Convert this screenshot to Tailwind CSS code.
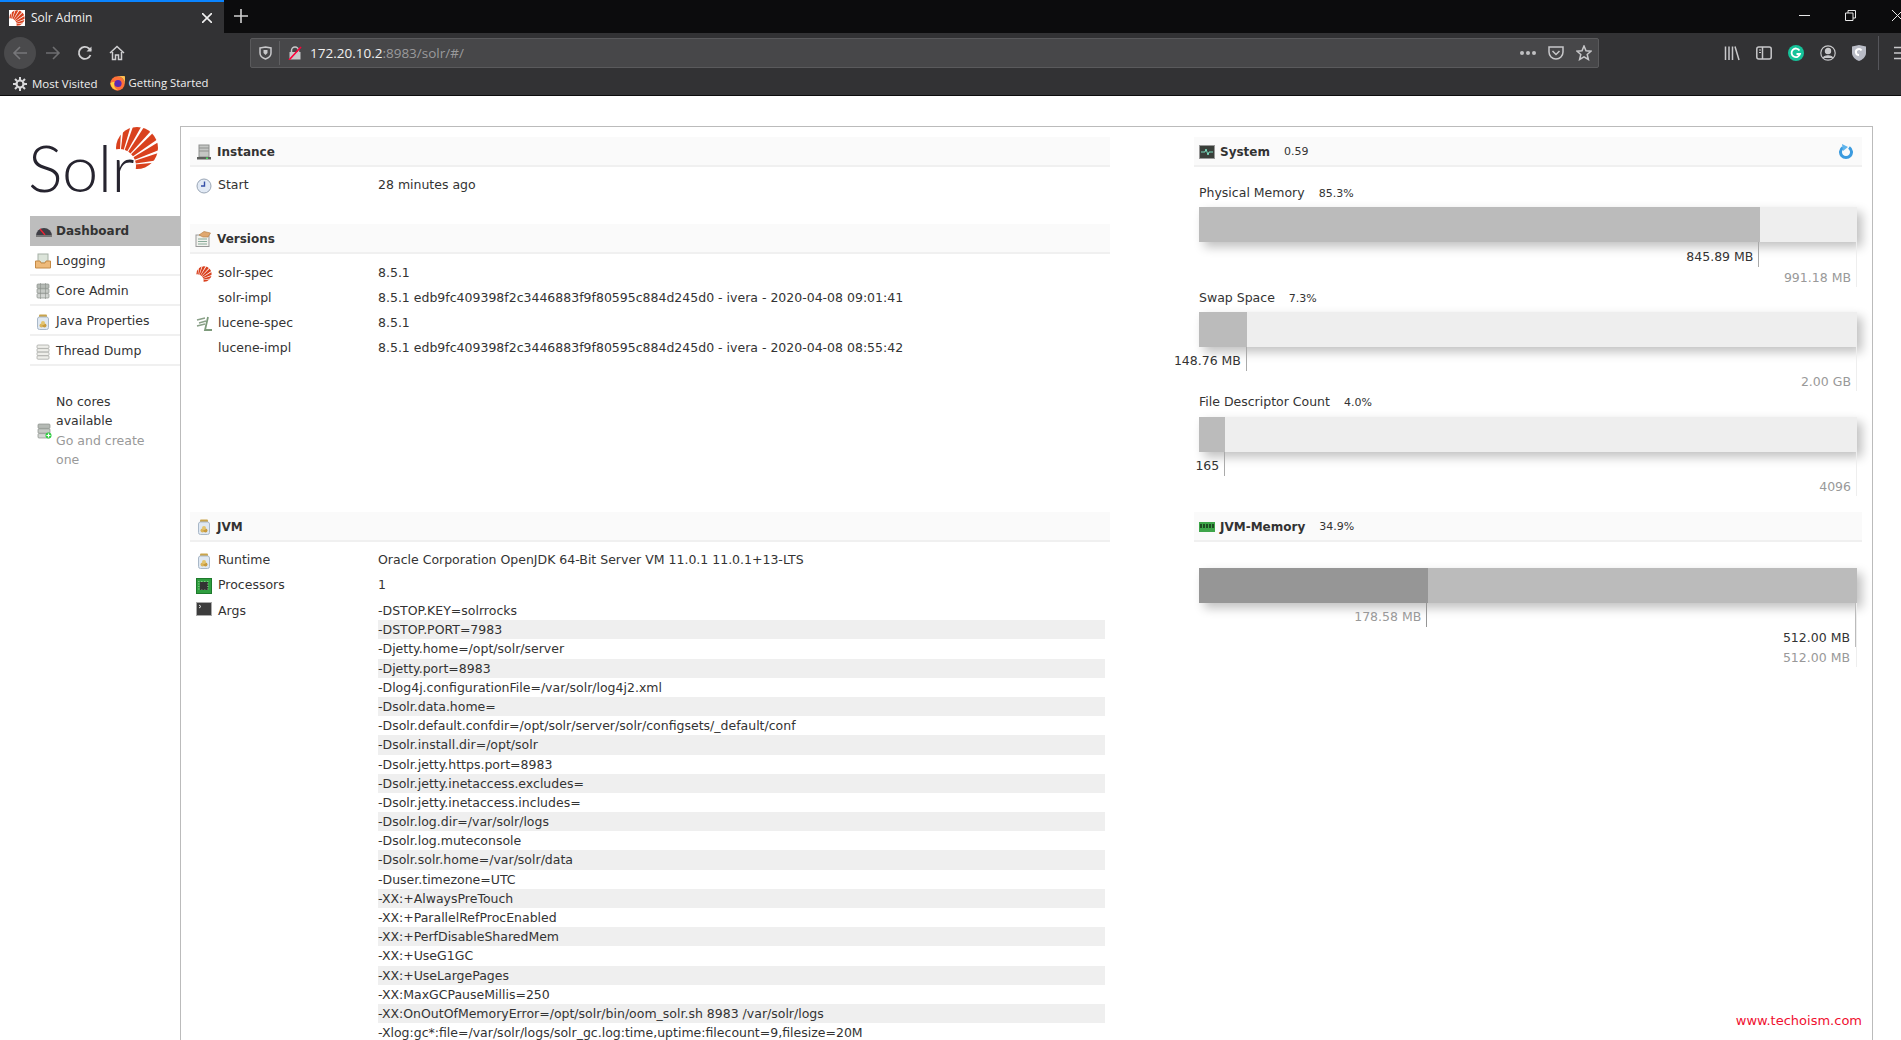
<!DOCTYPE html>
<html lang="en">
<head>
    <meta charset="UTF-8">
    <title>Solr Admin</title>
    <script src="https://cdn.jsdelivr.net/npm/@tailwindcss/browser@4"></script>
</head>
<body class="w-[1901px] h-[1040px] overflow-hidden bg-white text-[#333] text-[12.5px] [font-family:'DejaVu_Sans',sans-serif]">
    <svg class="hidden">
        <symbol id="sun" viewBox="0 0 44 44">
            <circle cx="22" cy="22" r="21" fill="#d9411e"/>
            <g fill="#fff">
                <circle cx="4" cy="40" r="17"/>
                <polygon points="4,40 12.1,-29.5 8.1,-29.9"/>
                <polygon points="4,40 27.5,-26 23.7,-27.2"/>
                <polygon points="4,40 41.8,-19 38.4,-21"/>
                <polygon points="4,40 54,-8.9 51.2,-11.7"/>
                <polygon points="4,40 63.8,3.6 61.6,.2"/>
                <polygon points="4,40 70.5,17.9 69.1,14.1"/>
                <polygon points="4,40 73.7,33.5 73.3,29.5"/>
            </g>
        </symbol>
        <symbol id="jar" viewBox="0 0 16 16">
            <rect x="4" y="0.5" width="8" height="3" rx="1" fill="#c9a44c"/>
            <rect x="2.5" y="3" width="11" height="12.5" rx="2" fill="#dfe8f2" stroke="#a9b8c8"/>
            <circle cx="6.5" cy="11.5" r="2" fill="#d9b45c"/>
            <circle cx="9.5" cy="11.5" r="2" fill="#c79a3e"/>
            <circle cx="8" cy="9" r="2" fill="#e3c46e"/>
        </symbol>
        <symbol id="db" viewBox="0 0 16 16">
            <rect x="2" y="1" width="12" height="4.4" rx="1" fill="#b5bab5" stroke="#8a8f8a" stroke-width=".7"/>
            <rect x="2" y="5.8" width="12" height="4.4" rx="1" fill="#c5c9c5" stroke="#8a8f8a" stroke-width=".7"/>
            <rect x="2" y="10.6" width="12" height="4.4" rx="1" fill="#d2d5d2" stroke="#8a8f8a" stroke-width=".7"/>
        </symbol>
    </svg>

    <!-- browser chrome -->
    <div class="h-[96px] bg-[#323234] text-[#f0f0f0] [font-family:'Open_Sans',sans-serif] border-b border-[#0c0c0d] overflow-hidden">
        <div class="h-[33px] bg-[#0c0c0d] flex">
            <div class="w-[224px] bg-[#323234] border-t-2 border-[#0a84ff] flex items-center pl-[9px] pr-[12px] text-[12px]">
                <svg class="w-4 h-4 bg-white" viewBox="0 0 16 16"><use href="#sun"/></svg>
                <span class="ml-[6px] flex-1">Solr Admin</span>
                <svg class="w-[10px] h-[10px]" viewBox="0 0 10 10" stroke="#f0f0f0" stroke-width="1.6"><path d="M0 0 10 10M10 0 0 10"/></svg>
            </div>
            <svg class="w-[14px] h-[14px] ml-[10px] mt-[9px]" viewBox="0 0 14 14" stroke="#d0d0d0" stroke-width="1.6"><path d="M7 0V14M0 7H14"/></svg>
            <div class="flex-1"></div>
            <div class="flex items-center pb-[3px]">
                <svg class="w-[11px] h-[11px]" viewBox="0 0 11 11" stroke="#e8e8e8"><path d="M0 5.5H11"/></svg>
                <svg class="w-[11px] h-[11px] ml-[35px]" viewBox="0 0 11 11" stroke="#e8e8e8" fill="none"><path d="M.5 3H8V10.500H.5ZM3 3V.5H10.500V8H8"/></svg>
                <svg class="w-[11px] h-[11px] ml-[36px] mr-[-2px]" viewBox="0 0 11 11" stroke="#e8e8e8"><path d="M0 0 11 11M11 0 0 11"/></svg>
            </div>
        </div>
        <div class="h-[39px] flex items-center [&>*]:shrink-0">
            <div class="w-8 h-8 rounded-full bg-[#4a4a4c] ml-1 flex items-center justify-center">
                <svg class="w-4 h-4" viewBox="0 0 16 16" fill="none" stroke="#77777a" stroke-width="1.6"><path d="M15 8H2M8 2 2 8l6 6"/></svg>
            </div>
            <svg class="w-4 h-4 ml-[9px]" viewBox="0 0 16 16" fill="none" stroke="#6e6e70" stroke-width="1.6"><path d="M1 8H14M8 2l6 6-6 6"/></svg>
            <svg class="w-4 h-4 ml-4" viewBox="0 0 16 16" fill="none" stroke="#d0d0d2" stroke-width="1.8"><path d="M13.500 10A6 6 0 1 1 12 3.500L14 5.500"/><path d="M14.500 1.500V6.500H9.500" fill="#d0d0d2" stroke="none"/></svg>
            <svg class="w-4 h-4 ml-4" viewBox="0 0 16 16" fill="none" stroke="#d0d0d2" stroke-width="1.5"><path d="M1 8 8 1.500 15 8M3.500 7V14.500H6.500V10H9.500V14.500H12.500V7"/></svg>
            <div class="w-[1349px] h-[30px] ml-[125px] bg-[#474749] border border-[#5a5a5c] rounded-[2px] flex items-center pl-[8px] pr-[6px]">
                <svg class="w-[13px] h-[14px]" viewBox="0 0 13 14" fill="none" stroke="#c8c8ca" stroke-width="1.5"><path d="M1 2 6.500 1 12 2V7C12 10 9.500 12 6.500 13 3.500 12 1 10 1 7Z"/><path d="M4.500 4H8.500V7L6.500 9 4.500 7Z" fill="#c8c8ca" stroke="none"/></svg>
                <div class="w-px h-[24px] bg-[#5f5f61] ml-[7px]"></div>
                <svg class="w-[14px] h-[14px] ml-[8px]" viewBox="0 0 14 14" fill="none"><path d="M3.500 6V4.500a3.500 3.500 0 0 1 7 0V6" stroke="#c8c8ca" stroke-width="1.5"/><rect x="1.500" y="6" width="11" height="7.500" fill="#c8c8ca"/><path d="M1 14 13 1" stroke="#ff0039" stroke-width="1.6"/></svg>
                <span class="ml-[8px] mt-[2px] text-[13.500px] text-[#f0f0f0]">172.20.10.2<span class="text-[#9a9a9c]">:8983/solr/#/</span></span>
                <div class="flex-1"></div>
                <div class="flex gap-[2px] mr-[12px]"><span class="w-1 h-1 rounded-full bg-[#c0c0c2]"></span><span class="w-1 h-1 rounded-full bg-[#c0c0c2]"></span><span class="w-1 h-1 rounded-full bg-[#c0c0c2]"></span></div>
                <svg class="w-4 h-4" viewBox="0 0 16 16" fill="none" stroke="#c8c8ca" stroke-width="1.500"><path d="M1 2H15V7A7 7 0 0 1 1 7Z"/><path d="M4.500 6 8 9.500 11.500 6"/></svg>
                <svg class="w-4 h-4 ml-[12px]" viewBox="0 0 16 16" fill="none" stroke="#c8c8ca" stroke-width="1.500"><path d="M8 1 10 5.800 15 6.200 11.200 9.500 12.400 14.500 8 11.800 3.600 14.500 4.800 9.500 1 6.200 6 5.800Z"/></svg>
            </div>
            <svg class="w-4 h-4 ml-[125px]" viewBox="0 0 16 16" stroke="#c8c8ca" stroke-width="1.500"><path d="M1.500 1.500V15M5 1.500V15M8.500 1.500V15M11 1.500 15 15"/></svg>
            <svg class="w-4 h-4 ml-4" viewBox="0 0 16 16" fill="none" stroke="#c8c8ca" stroke-width="1.500"><rect x=".8" y="2" width="14.400" height="12" rx="2"/><path d="M6.500 2V14" /><path d="M3 5H5M3 7.500H5" stroke-width="1"/></svg>
            <svg class="w-4 h-4 ml-4" viewBox="0 0 16 16" fill="none"><circle cx="8" cy="8" r="8" fill="#15c39a"/><path d="M11.500 5.500A4.300 4.300 0 1 0 12 9H8.500" stroke="#fff" stroke-width="1.800"/></svg>
            <svg class="w-4 h-4 ml-4" viewBox="0 0 16 16" fill="none" stroke="#c8c8ca" stroke-width="1.200"><circle cx="8" cy="8" r="7.200"/><circle cx="8" cy="6" r="2.600" fill="#c8c8ca"/><path d="M3.500 13C4 10 12 10 12.500 13" fill="#c8c8ca"/></svg>
            <svg class="w-[14px] h-4 ml-[16px]" viewBox="0 0 14 16"><path d="M0 1.500 7 0 14 1.500V8C14 12 10 15 7 16 4 15 0 12 0 8Z" fill="#b9bcc6"/><path d="M9.500 5.500A3 3 0 1 0 7 10" fill="none" stroke="#fff" stroke-width="2"/></svg>
            <div class="w-px h-[34px] bg-[#55555a] ml-[12px]"></div>
            <svg class="w-4 h-4 ml-[15px]" viewBox="0 0 16 16" stroke="#c8c8ca" stroke-width="1.600"><path d="M0 2.500H16M0 8H16M0 13.500H16"/></svg>
        </div>
        <div class="h-[23px] flex items-center text-[11.500px]">
            <svg class="w-[14px] h-[14px] ml-[13px]" viewBox="0 0 14 14" fill="none" stroke="#d8d8da"><circle cx="7" cy="7" r="3.500" stroke-width="2.200"/><path stroke-width="2" d="M7 0V3M7 11V14M0 7H3M11 7H14M2 2 4 4M10 10 12 12M12 2 10 4M4 10 2 12"/></svg>
            <span class="ml-[5px]">Most Visited</span>
            <svg class="w-[15px] h-[15px] ml-[12px]" viewBox="0 0 15 15"><circle cx="7.500" cy="7.500" r="7.200" fill="#ff7139"/><path d="M7.500 .3A7.200 7.200 0 0 1 14.700 7.500 5 5 0 0 0 7.500 .3Z" fill="#ffbd4f"/><circle cx="8" cy="7.500" r="3.600" fill="#5b2bb3"/><path d="M.4 7C1 12 5 14 8 14 5 13 3 9.500 4.500 6 3 6 1.500 6 .4 7Z" fill="#ffcf3f"/></svg>
            <span class="ml-[4px] text-[11.300px]">Getting Started</span>
        </div>
    </div>

    <div class="flex h-[944px] overflow-hidden pt-[30px] pl-[30px]">
        <!-- sidebar -->
        <div class="w-[150px] shrink-0">
            <div class="h-[90px] relative">
                <svg class="absolute left-[85px] top-0 w-[44px] h-[44px]"><use href="#sun"/></svg>
                <div class="relative pt-[5px] text-[#26242f] text-[65px] leading-[72px] font-light tracking-[-.5px] ml-[-2px] [font-family:Lato,sans-serif]">Solr</div>
            </div>
            <div class="h-[30px] bg-[#bdbdbd] flex items-center pl-[6px] font-bold text-[12px]">
                <svg class="w-4 h-4" viewBox="0 0 16 16"><path d="M0 13A8 8 0 0 1 16 13Z" fill="#3f3f46"/><path d="M4 6 9 12" stroke="#e23" stroke-width="1.300"/><rect y="12" width="16" height="2" fill="#777"/></svg>
                <span class="ml-[4px]">Dashboard</span>
            </div>
            <div class="h-[30px] border-b-2 border-[#f0f0f0] flex items-center pl-[5px] pt-[2px]">
                <svg class="w-4 h-4" viewBox="0 0 16 16"><rect x="3" y="1" width="10" height="9" fill="#dce4da" stroke="#a5b0a5"/><path d="M.5 8H5L6 10H10L11 8H15.500V15H.5Z" fill="#eeba7a" stroke="#c58a45"/></svg>
                <span class="ml-[5px]">Logging</span>
            </div>
            <div class="h-[30px] border-b-2 border-[#f0f0f0] flex items-center pl-[5px] pt-[2px]">
                <svg class="w-4 h-4" viewBox="0 0 16 16"><use href="#db"/><path d="M5.500 0V16M10.500 0V16" stroke="#8a8f8a" stroke-width=".6"/></svg>
                <span class="ml-[5px]">Core Admin</span>
            </div>
            <div class="h-[30px] border-b-2 border-[#f0f0f0] flex items-center pl-[5px] pt-[3px]">
                <svg class="w-4 h-4"><use href="#jar"/></svg>
                <span class="ml-[5px]">Java Properties</span>
            </div>
            <div class="h-[30px] border-b-2 border-[#f0f0f0] flex items-center pl-[5px] pt-[3px]">
                <svg class="w-4 h-4" viewBox="0 0 16 16" fill="#eeeeea" stroke="#a8aaa6" stroke-width=".8"><rect x="2" y="1" width="12" height="3.400" rx="1"/><rect x="2" y="4.600" width="12" height="3.400" rx="1"/><rect x="2" y="8.200" width="12" height="3.400" rx="1"/><rect x="2" y="11.800" width="12" height="3.400" rx="1"/></svg>
                <span class="ml-[5px]">Thread Dump</span>
            </div>
            <div class="mt-[26px] flex items-center pl-[6px] leading-[19.300px]">
                <svg class="w-4 h-4 shrink-0" viewBox="0 0 16 16"><use href="#db"/><circle cx="12.500" cy="12.500" r="3" fill="#2ecc40"/><path d="M12.500 10.500V14.500M10.500 12.500H14.500" stroke="#fff" stroke-width="1.200"/></svg>
                <div class="ml-[4px] w-[90px]">
                    <div>No cores available</div>
                    <div class="text-[#999]">Go and create one</div>
                </div>
            </div>
        </div>

        <!-- main frame -->
        <div class="w-[1693px] h-[1000px] border-l border-t border-r border-[#bbb] flex pt-[10px]">
            <div class="w-[920px] ml-[9px] shrink-0">
                <section class="h-[87px]">
                    <div class="h-[30px] bg-[#fafafa] border-b-2 border-[#f0f0f0] flex items-center pl-[6px] pt-[2px] font-bold text-[12px]">
                        <svg class="w-4 h-4" viewBox="0 0 16 16"><rect x="3" y="1" width="10" height="12" fill="#c4c6c4" stroke="#8e908e"/><path d="M3 4H13M3 7H13" stroke="#8e908e"/><rect x="1" y="13" width="14" height="2.500" fill="#5d5f5d"/><rect x="10" y="13.500" width="2" height="1.500" fill="#4ade60"/></svg>
                        <span class="ml-[5px]">Instance</span>
                    </div>
                    <div class="pt-[6px]">
                        <div class="h-[25px] flex items-center pl-[6px]">
                            <svg class="w-4 h-4 shrink-0" viewBox="0 0 16 16"><circle cx="8" cy="8" r="7" fill="#e2eaf5" stroke="#9aa6b6"/><path d="M8.500 3.500V8H5" fill="none" stroke="#3550a8" stroke-width="1.400"/></svg>
                            <span class="w-[160px] ml-[6px] shrink-0">Start</span><span>28 minutes ago</span>
                        </div>
                    </div>
                </section>
                <section class="h-[288px]">
                    <div class="h-[30px] bg-[#fafafa] border-b-2 border-[#f0f0f0] flex items-center pl-[5px] pt-[2px] font-bold text-[12px]">
                        <svg class="w-4 h-4" viewBox="0 0 16 16"><rect x="1" y="4" width="13" height="11.500" fill="#f2f2ee" stroke="#999"/><path d="M3 8H12M3 10.500H12M3 13H12" stroke="#8a9" /><path d="M4 4 9 .5 15.500 2 13 6 8 6Z" fill="#e0a870" stroke="#b07a40" stroke-width=".6"/></svg>
                        <span class="ml-[6px]">Versions</span>
                    </div>
                    <div class="pt-[7px]">
                        <div class="h-[25px] flex items-center pl-[6px]">
                            <svg class="w-4 h-4 shrink-0"><use href="#sun" width="16" height="16"/></svg>
                            <span class="w-[160px] ml-[6px] shrink-0">solr-spec</span><span>8.5.1</span>
                        </div>
                        <div class="h-[25px] flex items-center pl-[28px]">
                            <span class="w-[160px] shrink-0">solr-impl</span><span>8.5.1 edb9fc409398f2c3446883f9f80595c884d245d0 - ivera - 2020-04-08 09:01:41</span>
                        </div>
                        <div class="h-[25px] flex items-center pl-[6px]">
                            <svg class="w-4 h-4 shrink-0" viewBox="0 0 16 16" fill="none" stroke="#8aa088" stroke-width="1.400"><path d="M1 4 9 2M3 7 10 5M1 10 9 8"/><path d="M12 1 9 14H16" stroke="#7d9a7b" stroke-width="1.800"/></svg>
                            <span class="w-[160px] ml-[6px] shrink-0">lucene-spec</span><span>8.5.1</span>
                        </div>
                        <div class="h-[25px] flex items-center pl-[28px]">
                            <span class="w-[160px] shrink-0">lucene-impl</span><span>8.5.1 edb9fc409398f2c3446883f9f80595c884d245d0 - ivera - 2020-04-08 08:55:42</span>
                        </div>
                    </div>
                </section>
                <section>
                    <div class="h-[30px] bg-[#fafafa] border-b-2 border-[#f0f0f0] flex items-center pl-[6px] pt-[2px] font-bold text-[12px]">
                        <svg class="w-4 h-4"><use href="#jar"/></svg>
                        <span class="ml-[5px]">JVM</span>
                    </div>
                    <div class="pt-[6px]">
                        <div class="h-[25px] flex items-center pl-[6px]">
                            <svg class="w-4 h-4 shrink-0"><use href="#jar"/></svg>
                            <span class="w-[160px] ml-[6px] shrink-0">Runtime</span><span>Oracle Corporation OpenJDK 64-Bit Server VM 11.0.1 11.0.1+13-LTS</span>
                        </div>
                        <div class="h-[25px] flex items-center pl-[6px]">
                            <svg class="w-4 h-4 shrink-0" viewBox="0 0 16 16"><rect x=".5" y=".5" width="15" height="15" fill="#2f9e3f" stroke="#1d7a2c"/><rect x="4" y="4" width="8" height="8" fill="#333"/><path d="M2 3.500H14M2 6H14M2 8.500H14M2 11H14" stroke="#c8e8c0" stroke-width=".5" stroke-dasharray="1.500 1.500"/><rect x="5" y="5" width="6" height="6" fill="#333"/></svg>
                            <span class="w-[160px] ml-[6px] shrink-0">Processors</span><span>1</span>
                        </div>
                        <div class="flex mt-[3px] pl-[6px]">
                            <svg class="w-4 h-4 shrink-0" viewBox="0 0 16 16"><rect x=".5" y="1.500" width="15" height="13" fill="#3c3c3c" stroke="#aaa"/><path d="M3 4 5 5.500 3 7" stroke="#ddd" fill="none"/></svg>
                            <span class="w-[160px] ml-[6px] shrink-0 leading-[19.200px]">Args</span>
                            <div class="w-[727px] leading-[19.200px]">
                                <div class="h-[19.200px]">-DSTOP.KEY=solrrocks</div>
                                <div class="h-[19.200px] bg-[#efefef]">-DSTOP.PORT=7983</div>
                                <div class="h-[19.200px]">-Djetty.home=/opt/solr/server</div>
                                <div class="h-[19.200px] bg-[#efefef]">-Djetty.port=8983</div>
                                <div class="h-[19.200px]">-Dlog4j.configurationFile=/var/solr/log4j2.xml</div>
                                <div class="h-[19.200px] bg-[#efefef]">-Dsolr.data.home=</div>
                                <div class="h-[19.200px]">-Dsolr.default.confdir=/opt/solr/server/solr/configsets/_default/conf</div>
                                <div class="h-[19.200px] bg-[#efefef]">-Dsolr.install.dir=/opt/solr</div>
                                <div class="h-[19.200px]">-Dsolr.jetty.https.port=8983</div>
                                <div class="h-[19.200px] bg-[#efefef]">-Dsolr.jetty.inetaccess.excludes=</div>
                                <div class="h-[19.200px]">-Dsolr.jetty.inetaccess.includes=</div>
                                <div class="h-[19.200px] bg-[#efefef]">-Dsolr.log.dir=/var/solr/logs</div>
                                <div class="h-[19.200px]">-Dsolr.log.muteconsole</div>
                                <div class="h-[19.200px] bg-[#efefef]">-Dsolr.solr.home=/var/solr/data</div>
                                <div class="h-[19.200px]">-Duser.timezone=UTC</div>
                                <div class="h-[19.200px] bg-[#efefef]">-XX:+AlwaysPreTouch</div>
                                <div class="h-[19.200px]">-XX:+ParallelRefProcEnabled</div>
                                <div class="h-[19.200px] bg-[#efefef]">-XX:+PerfDisableSharedMem</div>
                                <div class="h-[19.200px]">-XX:+UseG1GC</div>
                                <div class="h-[19.200px] bg-[#efefef]">-XX:+UseLargePages</div>
                                <div class="h-[19.200px]">-XX:MaxGCPauseMillis=250</div>
                                <div class="h-[19.200px] bg-[#efefef]">-XX:OnOutOfMemoryError=/opt/solr/bin/oom_solr.sh 8983 /var/solr/logs</div>
                                <div class="h-[19.200px]">-Xlog:gc*:file=/var/solr/logs/solr_gc.log:time,uptime:filecount=9,filesize=20M</div>
                            </div>
                        </div>
                    </div>
                </section>
            </div>

            <div class="w-[668px] ml-[84px] shrink-0">
                <section class="h-[375px]">
                    <div class="h-[30px] bg-[#fafafa] border-b-2 border-[#f0f0f0] flex items-center pl-[5px] pt-[2px]">
                        <svg class="w-4 h-4" viewBox="0 0 16 16"><rect x=".5" y="1.500" width="15" height="13" fill="#3a3f3a" stroke="#999"/><path d="M2 8H6L7 5 9 11 10 8H14" fill="none" stroke="#8fd" stroke-width=".8"/></svg>
                        <span class="ml-[5px] font-bold text-[12px]">System</span>
                        <span class="ml-[14px] text-[11px]">0.59</span>
                        <div class="flex-1"></div>
                        <svg class="w-[14px] h-[16px] mr-[9px]" viewBox="0 0 14 16" fill="none"><path d="M4 3.500A5.500 5.500 0 1 0 10 3.500" stroke="#3b9bdf" stroke-width="3"/><path d="M3 0 9 3 4 7Z" fill="#5fb4ec"/></svg>
                    </div>
                    <div class="pl-[5px] pr-[5px]">
                        <div class="h-[40px] pt-[18px] leading-[16px]">Physical Memory<span class="ml-[14px] text-[11px]">85.3%</span></div>
                        <div class="h-[35px] bg-[#eee] shadow-[5px_5px_10px_#c0c0c0]">
                            <div class="h-full w-[85.3%] bg-[#bbb]"></div>
                        </div>
                        <div class="border-r border-[#eee]">
                            <div class="h-[25px] w-[85.3%] border-r border-[#aaa] flex items-center justify-end pr-[5px] pt-[5px] whitespace-nowrap">845.89 MB</div>
                            <div class="h-[20px] flex items-center justify-end pr-[5px] pt-[2px] text-[#999]">991.18 MB</div>
                        </div>
                        <div class="h-[25px] pt-[3px] leading-[16px]">Swap Space<span class="ml-[14px] text-[11px]">7.3%</span></div>
                        <div class="h-[35px] bg-[#eee] shadow-[5px_5px_10px_#c0c0c0]">
                            <div class="h-full w-[7.300%] bg-[#bbb]"></div>
                        </div>
                        <div class="border-r border-[#eee]">
                            <div class="h-[24px] w-[7.300%] border-r border-[#aaa] flex items-center justify-end pr-[5px] pt-[5px] whitespace-nowrap">148.76 MB</div>
                            <div class="h-[20px] flex items-center justify-end pr-[5px] pt-[2px] text-[#999]">2.00 GB</div>
                        </div>
                        <div class="h-[26px] pt-[3px] leading-[16px]">File Descriptor Count<span class="ml-[14px] text-[11px]">4.0%</span></div>
                        <div class="h-[35px] bg-[#eee] shadow-[5px_5px_10px_#c0c0c0]">
                            <div class="h-full w-[4%] bg-[#bbb]"></div>
                        </div>
                        <div class="border-r border-[#eee]">
                            <div class="h-[24px] w-[4%] border-r border-[#aaa] flex items-center justify-end pr-[5px] pt-[5px] whitespace-nowrap">165</div>
                            <div class="h-[20px] flex items-center justify-end pr-[5px] pt-[2px] text-[#999]">4096</div>
                        </div>
                    </div>
                </section>
                <section>
                    <div class="h-[30px] bg-[#fafafa] border-b-2 border-[#f0f0f0] flex items-center pl-[5px] pt-[2px]">
                        <svg class="w-[16px] h-[10px]" viewBox="0 0 16 10"><rect width="16" height="10" fill="#3ea54a"/><path d="M2 2V6M5 2V6M8 2V6M11 2V6M14 2V6" stroke="#1d4d22" stroke-width="2"/></svg>
                        <span class="ml-[5px] font-bold text-[12px]">JVM-Memory</span>
                        <span class="ml-[14px] text-[11px]">34.9%</span>
                    </div>
                    <div class="pl-[5px] pr-[5px] pt-[26px]">
                        <div class="h-[35px] bg-[#bbb] shadow-[5px_5px_10px_#c0c0c0]">
                            <div class="h-full w-[34.800%] bg-[#969696]"></div>
                        </div>
                        <div class="border-r border-[#eee]">
                            <div class="border-r border-[#bbb]">
                                <div class="h-[24px] w-[34.800%] border-r border-[#969696] flex items-center justify-end pr-[5px] pt-[5px] whitespace-nowrap text-[#999]">178.58 MB</div>
                                <div class="h-[20px] flex items-center justify-end pr-[5px] pt-[2px]">512.00 MB</div>
                            </div>
                            <div class="h-[20px] flex items-center justify-end pr-[6px] pt-[2px] text-[#999]">512.00 MB</div>
                        </div>
                    </div>
                </section>
            </div>
        </div>
    </div>

    <div class="absolute right-[39px] bottom-[10px] text-[13px] text-[#f01030]">www.techoism.com</div>
</body>
</html>
